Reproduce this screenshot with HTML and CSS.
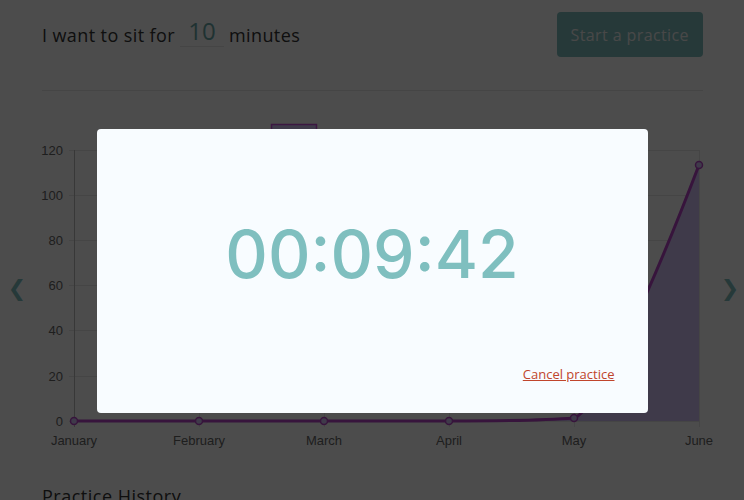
FILE: index.html
```html
<!DOCTYPE html>
<html>
<head>
<meta charset="utf-8">
<link rel="stylesheet" href="styles.css">
</head>
<body>
<main class="page">
  <header class="header">
    <p class="sentence">I want to sit for <span class="minutes">10</span> minutes</p>
    <button class="start-btn">Start a practice</button>
  </header>
  <hr class="divider">
  <section class="chart-row">
    <span class="arrow">&#10094;</span>
    <svg class="chart" width="685" height="345" viewBox="35 110 685 345" xmlns="http://www.w3.org/2000/svg">
      <g class="legend">
        <rect x="272.5" y="124.5" width="45" height="12" fill="#d2c1f7" stroke="#c853dc" stroke-width="1.5"/>
        <text x="324" y="140" font-size="12" fill="#666" font-family="Liberation Sans, Arial, sans-serif">Time meditated</text>
      </g>
      <g stroke="#e6e6e6" stroke-width="1">
        <line x1="70" y1="150.5" x2="700" y2="150.5"/>
        <line x1="70" y1="195.5" x2="700" y2="195.5"/>
        <line x1="70" y1="240.5" x2="700" y2="240.5"/>
        <line x1="70" y1="285.5" x2="700" y2="285.5"/>
        <line x1="70" y1="330.5" x2="700" y2="330.5"/>
        <line x1="70" y1="376.5" x2="700" y2="376.5"/>
        <line x1="70" y1="421.5" x2="700" y2="421.5"/>
        <line x1="200.5" y1="150" x2="200.5" y2="427"/>
        <line x1="325.5" y1="150" x2="325.5" y2="427"/>
        <line x1="450.5" y1="150" x2="450.5" y2="427"/>
        <line x1="575.5" y1="150" x2="575.5" y2="427"/>
        <line x1="700.5" y1="150" x2="700.5" y2="427"/>
      </g>
      <line x1="75.5" y1="150" x2="75.5" y2="427" stroke="#bdbdbd" stroke-width="1"/>
      <g font-size="13" fill="#666" font-family="Liberation Sans, Arial, sans-serif" text-anchor="end">
        <text x="64" y="155">120</text>
        <text x="64" y="200">100</text>
        <text x="64" y="245">80</text>
        <text x="64" y="290">60</text>
        <text x="64" y="335">40</text>
        <text x="64" y="381">20</text>
        <text x="64" y="426">0</text>
      </g>
      <g font-size="13" fill="#666" font-family="Liberation Sans, Arial, sans-serif" text-anchor="middle">
        <text x="75" y="445">January</text>
        <text x="200" y="445">February</text>
        <text x="325" y="445">March</text>
        <text x="450" y="445">April</text>
        <text x="575" y="445">May</text>
        <text x="700" y="445">June</text>
      </g>
      <path d="M75,421 L450,421 C500,421 550,420 575,418 C600,410 660,270 700,165 L700,421 Z" fill="#d2c1f7"/>
      <path d="M75,421 L450,421 C500,421 550,420 575,418 C600,410 660,270 700,165" fill="none" stroke="#b845c8" stroke-width="3"/>
      <g fill="#d2c1f7" stroke="#b845c8" stroke-width="1.5">
        <circle cx="75" cy="421" r="3.5"/>
        <circle cx="200" cy="421" r="3.5"/>
        <circle cx="325" cy="421" r="3.5"/>
        <circle cx="450" cy="421" r="3.5"/>
        <circle cx="575" cy="418" r="3.5"/>
        <circle cx="700" cy="165" r="3.5"/>
      </g>
    </svg>
    <span class="arrow arrow-right">&#10095;</span>
  </section>
  <h2 class="history-title">Practice History</h2>
</main>
<div class="overlay">
  <div class="modal">
    <div class="timer">00:09:42</div>
    <a class="cancel" href="#">Cancel practice</a>
  </div>
</div>
</body>
</html>
```

FILE: styles.css
```css
html, body {
  margin: 0;
  padding: 0;
  background: #ffffff;
  overflow: hidden;
}
body {
  font-family: "Open Sans", "DejaVu Sans", sans-serif;
  color: #333333;
  height: 500px;
}
.page {
  padding: 12px 41px 0 42px;
}
.header {
  display: flex;
  justify-content: space-between;
  align-items: center;
  height: 45px;
}
.sentence {
  margin: 0;
  font-size: 18px;
  letter-spacing: 0.4px;
  display: flex;
  align-items: center;
  gap: 5px;
}
.minutes {
  display: inline-block;
  width: 44px;
  text-align: center;
  font-size: 24px;
  font-weight: 400;
  letter-spacing: 0;
  color: #6aa8a8;
  border-bottom: 1px solid #e8e8e8;
  line-height: 30px;
  margin-top: -6px;
}
.start-btn {
  height: 45px;
  padding: 0 14px;
  border: none;
  border-radius: 4px;
  background: #7fbfbf;
  color: #f2f2f2;
  font-family: inherit;
  font-size: 16px;
  font-weight: 500;
  letter-spacing: 0.4px;
}
.divider {
  margin: 33px 0 0;
  border: none;
  border-top: 1px solid #e6e6e6;
}
.chart-row {
  display: flex;
  align-items: center;
  margin: 19px -41px 0 -42px;
}
.arrow {
  width: 35px;
  text-align: center;
  font-size: 22px;
  font-weight: 700;
  color: #7fbfbf;
  padding-top: 8px;
}
.arrow-right {
  width: 24px;
  text-align: left;
  padding-left: 2px;
}
.chart {
  display: block;
  flex: none;
}
.history-title {
  margin: 29px 0 0;
  font-size: 18px;
  font-weight: 400;
  letter-spacing: 0.5px;
}
.overlay {
  position: fixed;
  inset: 0;
  background: rgba(0, 0, 0, 0.7);
  display: flex;
  justify-content: center;
  align-items: flex-start;
  padding-top: 129px;
}
.modal {
  width: 551px;
  height: 284px;
  background: #f8fcff;
  border-radius: 4px;
  display: flex;
  flex-direction: column;
  box-sizing: border-box;
  padding: 85px 33px 0 0;
}
.timer {
  text-align: center;
  font-family: Inter, "Open Sans", sans-serif;
  font-size: 66px;
  font-weight: 500;
  color: #7fbfbf;
  padding-left: 33px;
  line-height: 80px;
}
.cancel {
  align-self: flex-end;
  margin-top: 71px;
  font-size: 13px;
  color: #c0452c;
  text-decoration: underline;
}
```
